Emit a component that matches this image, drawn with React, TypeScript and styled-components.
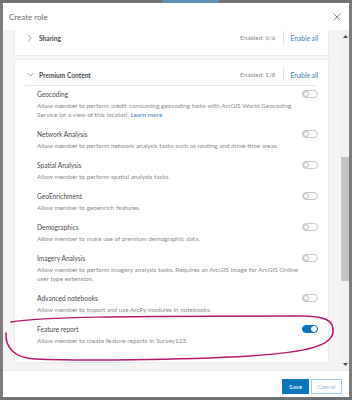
import styled, { createGlobalStyle } from 'styled-components';

const GlobalStyle = createGlobalStyle`
	html, body {
		margin: 0;
		padding: 0;
		background: #7d7d7d;
	}
	body {
		font-family: Lato, "Open Sans", sans-serif;
	}
`;

type Permission = {
	title: string;
	text: string;
	link?: string;
	enabled?: boolean;
};

const PERMISSIONS: Permission[] = [
	{
		title: 'Geocoding',
		text: 'Allow member to perform credit-consuming geocoding tasks with ArcGIS World Geocoding Service (or a view of this locator).',
		link: 'Learn more',
	},
	{
		title: 'Network Analysis',
		text: 'Allow member to perform network analysis tasks such as routing and drive-time areas.',
	},
	{ title: 'Spatial Analysis', text: 'Allow member to perform spatial analysis tasks.' },
	{ title: 'GeoEnrichment', text: 'Allow member to geoenrich features.' },
	{ title: 'Demographics', text: 'Allow member to make use of premium demographic data.' },
	{
		title: 'Imagery Analysis',
		text: 'Allow member to perform imagery analysis tasks. Requires an ArcGIS Image for ArcGIS Online user type extension.',
	},
	{ title: 'Advanced notebooks', text: 'Allow member to import and use ArcPy modules in notebooks.' },
	{ title: 'Feature report', text: 'Allow member to create feature reports in Survey123.', enabled: true },
];

const Screen = styled.div`
	position: relative;
	width: 352px;
	height: 400px;
	display: flex;
	flex-direction: column;
	background: #7d7d7d;
	overflow: hidden;
`;

const TopStrip = styled.div`
	height: 3px;
	display: flex;
	background: #6f7275;
`;

const TopTab = styled.div`
	margin-left: 162px;
	width: 57px;
	background: #5b8fb8;
`;

const Modal = styled.div`
	margin: 0 3px;
	height: 394px;
	display: flex;
	flex-direction: column;
	background: #fff;
`;

const Header = styled.div`
	height: 27px;
	flex-shrink: 0;
	display: flex;
	align-items: center;
	justify-content: space-between;
	padding: 0 8px 0 6px;
`;

const Title = styled.div`
	font-size: 8px;
	color: #6a6a6a;
`;

const Body = styled.div`
	flex: 1;
	display: flex;
	background: #f4f4f4;
	overflow: hidden;
`;

const Scroller = styled.div`
	flex: 1;
	overflow: hidden;
	padding: 0 13px 0 12px;
`;

const Inner = styled.div`
	margin-top: -7px;
	display: flex;
	flex-direction: column;
	gap: 5px;
`;

const Card = styled.div<{ $open?: boolean }>`
	background: #fff;
	box-shadow: 0 0 0 1px #ececec;
	padding: 4px 10px ${({ $open }) => ($open ? '17px' : '6px')};
`;

const CardHeader = styled.div<{ $open?: boolean }>`
	height: 21px;
	display: flex;
	align-items: center;
	border-bottom: 1px solid ${({ $open }) => ($open ? '#e8e8e8' : 'transparent')};
`;

const Chevron = styled.span`
	width: 14px;
	display: flex;
	align-items: center;
	padding-left: 2px;
	box-sizing: border-box;
`;

const CardTitle = styled.div`
	flex: 1;
	font-size: 6.6px;
	font-weight: 700;
	color: #4a4a4a;
`;

const Count = styled.div`
	font-size: 6.3px;
	color: #8a8a8a;
`;

const VDivider = styled.div`
	width: 1px;
	height: 13px;
	background: #e4e4e4;
	margin: 0 7px;
`;

const EnableAll = styled.span`
	font-size: 6.6px;
	color: #3a7dbb;
`;

const InlineLink = styled.span`
	color: #3a7dbb;
`;

const ItemList = styled.div`
	display: flex;
	flex-direction: column;
	gap: 8px;
	padding: 1px 0 0 12px;
`;

const Item = styled.div`
	display: flex;
	flex-direction: column;
	gap: 1px;
`;

const ItemHead = styled.div`
	height: 13px;
	display: flex;
	align-items: center;
	justify-content: space-between;
`;

const ItemTitle = styled.div`
	font-size: 6.6px;
	color: #4a4a4a;
`;

const ItemText = styled.div`
	max-width: 268px;
	font-size: 6.4px;
	line-height: 9px;
	color: #8c8c8c;
`;

const Toggle = styled.span<{ $on?: boolean }>`
	width: 16px;
	height: 8px;
	box-sizing: border-box;
	border-radius: 4px;
	display: flex;
	align-items: center;
	justify-content: ${({ $on }) => ($on ? 'flex-end' : 'flex-start')};
	padding: 0 1px;
	background: ${({ $on }) => ($on ? '#0b74bd' : '#fff')};
	border: 1px solid ${({ $on }) => ($on ? '#0b74bd' : '#c8c8c8')};
`;

const Knob = styled.span<{ $on?: boolean }>`
	width: 6px;
	height: 6px;
	box-sizing: border-box;
	border-radius: 50%;
	background: #fff;
	border: 1px solid ${({ $on }) => ($on ? '#fff' : '#bdbdbd')};
	margin-left: ${({ $on }) => ($on ? '0' : '-1px')};
	margin-right: ${({ $on }) => ($on ? '-1px' : '0')};
`;

const ScrollBar = styled.div`
	width: 8px;
	display: flex;
	flex-direction: column;
	align-items: center;
	background: #f1f1f1;
`;

const ArrowBox = styled.div`
	height: 12px;
	display: flex;
	align-items: center;
	justify-content: center;
`;

const Track = styled.div`
	flex: 1;
	width: 100%;
	display: flex;
	flex-direction: column;
`;

const Thumb = styled.div`
	width: 100%;
	background: #c4c4c4;
`;

const Footer = styled.div`
	height: 27px;
	flex-shrink: 0;
	display: flex;
	justify-content: flex-end;
	align-items: flex-start;
	gap: 2px;
	padding: 8px 7px 0 0;
	box-sizing: border-box;
	border-top: 1px solid #ebebeb;
`;

const Button = styled.button<{ $primary?: boolean }>`
	height: 15px;
	padding: 0;
	width: ${({ $primary }) => ($primary ? '27px' : '31px')};
	font-family: Lato, "Open Sans", sans-serif;
	font-size: 6.3px;
	border: 1px solid ${({ $primary }) => ($primary ? '#0b74bd' : '#9fcbe9')};
	background: ${({ $primary }) => ($primary ? '#0b74bd' : '#fff')};
	color: ${({ $primary }) => ($primary ? '#fff' : '#9ab6cf')};
`;

const Annotation = styled.svg`
	position: absolute;
	left: 0;
	top: 0;
	pointer-events: none;
`;

const ChevronRight = () => (
	<svg width="5" height="8" viewBox="0 0 5 8">
		<path d="M1 0.5 L4 4 L1 7.5" fill="none" stroke="#8a8a8a" strokeWidth="0.8" />
	</svg>
);

const ChevronDown = () => (
	<svg width="7" height="5" viewBox="0 0 7 5">
		<path d="M0.5 1 L3.5 4 L6.5 1" fill="none" stroke="#8a8a8a" strokeWidth="0.8" />
	</svg>
);

const SectionHeader = ({ title, count, open }: { title: string; count: string; open?: boolean }) => (
	<CardHeader $open={open}>
		<Chevron>{open ? <ChevronDown /> : <ChevronRight />}</Chevron>
		<CardTitle>{title}</CardTitle>
		<Count>Enabled: {count}</Count>
		<VDivider />
		<EnableAll>Enable all</EnableAll>
	</CardHeader>
);

export default function App() {
	return (
		<Screen>
			<GlobalStyle />
			<TopStrip>
				<TopTab />
			</TopStrip>
			<Modal>
				<Header>
					<Title>Create role</Title>
					<svg width="8" height="8" viewBox="0 0 8 8">
						<path d="M0.5 0.5 L7.5 7.5 M7.5 0.5 L0.5 7.5" stroke="#6a6a6a" strokeWidth="0.8" />
					</svg>
				</Header>
				<Body>
					<Scroller>
						<Inner>
							<Card>
								<SectionHeader title="Sharing" count="0/6" />
							</Card>
							<Card $open>
								<SectionHeader title="Premium Content" count="1/8" open />
								<ItemList>
									{PERMISSIONS.map(({ title, text, link, enabled }) => (
										<Item key={title}>
											<ItemHead>
												<ItemTitle>{title}</ItemTitle>
												<Toggle $on={enabled}>
													<Knob $on={enabled} />
												</Toggle>
											</ItemHead>
											<ItemText>
												{text}
												{link && <InlineLink> {link}</InlineLink>}
											</ItemText>
										</Item>
									))}
								</ItemList>
							</Card>
						</Inner>
					</Scroller>
					<ScrollBar>
						<ArrowBox>
							<svg width="5" height="3" viewBox="0 0 5 3">
								<path d="M0 3 L2.5 0 L5 3 Z" fill="#505050" />
							</svg>
						</ArrowBox>
						<Track>
							<div style={{ height: 115 }} />
							<Thumb style={{ height: 124 }} />
						</Track>
						<ArrowBox>
							<svg width="5" height="3" viewBox="0 0 5 3">
								<path d="M0 0 L2.5 3 L5 0 Z" fill="#505050" />
							</svg>
						</ArrowBox>
					</ScrollBar>
				</Body>
				<Footer>
					<Button $primary>Save</Button>
					<Button>Cancel</Button>
				</Footer>
			</Modal>
			<TopStrip />
			<Annotation width="352" height="400" viewBox="0 0 352 400">
				<path
					d="M11 322 C40 317, 120 316, 300 316 C325 316, 334 320, 333 332 C332 345, 310 352, 250 356 C180 360, 80 361, 35 359 C15 358, 5 348, 6 333"
					fill="none"
					stroke="#b3186c"
					strokeWidth="1.5"
					strokeLinecap="round"
				/>
			</Annotation>
		</Screen>
	);
}
